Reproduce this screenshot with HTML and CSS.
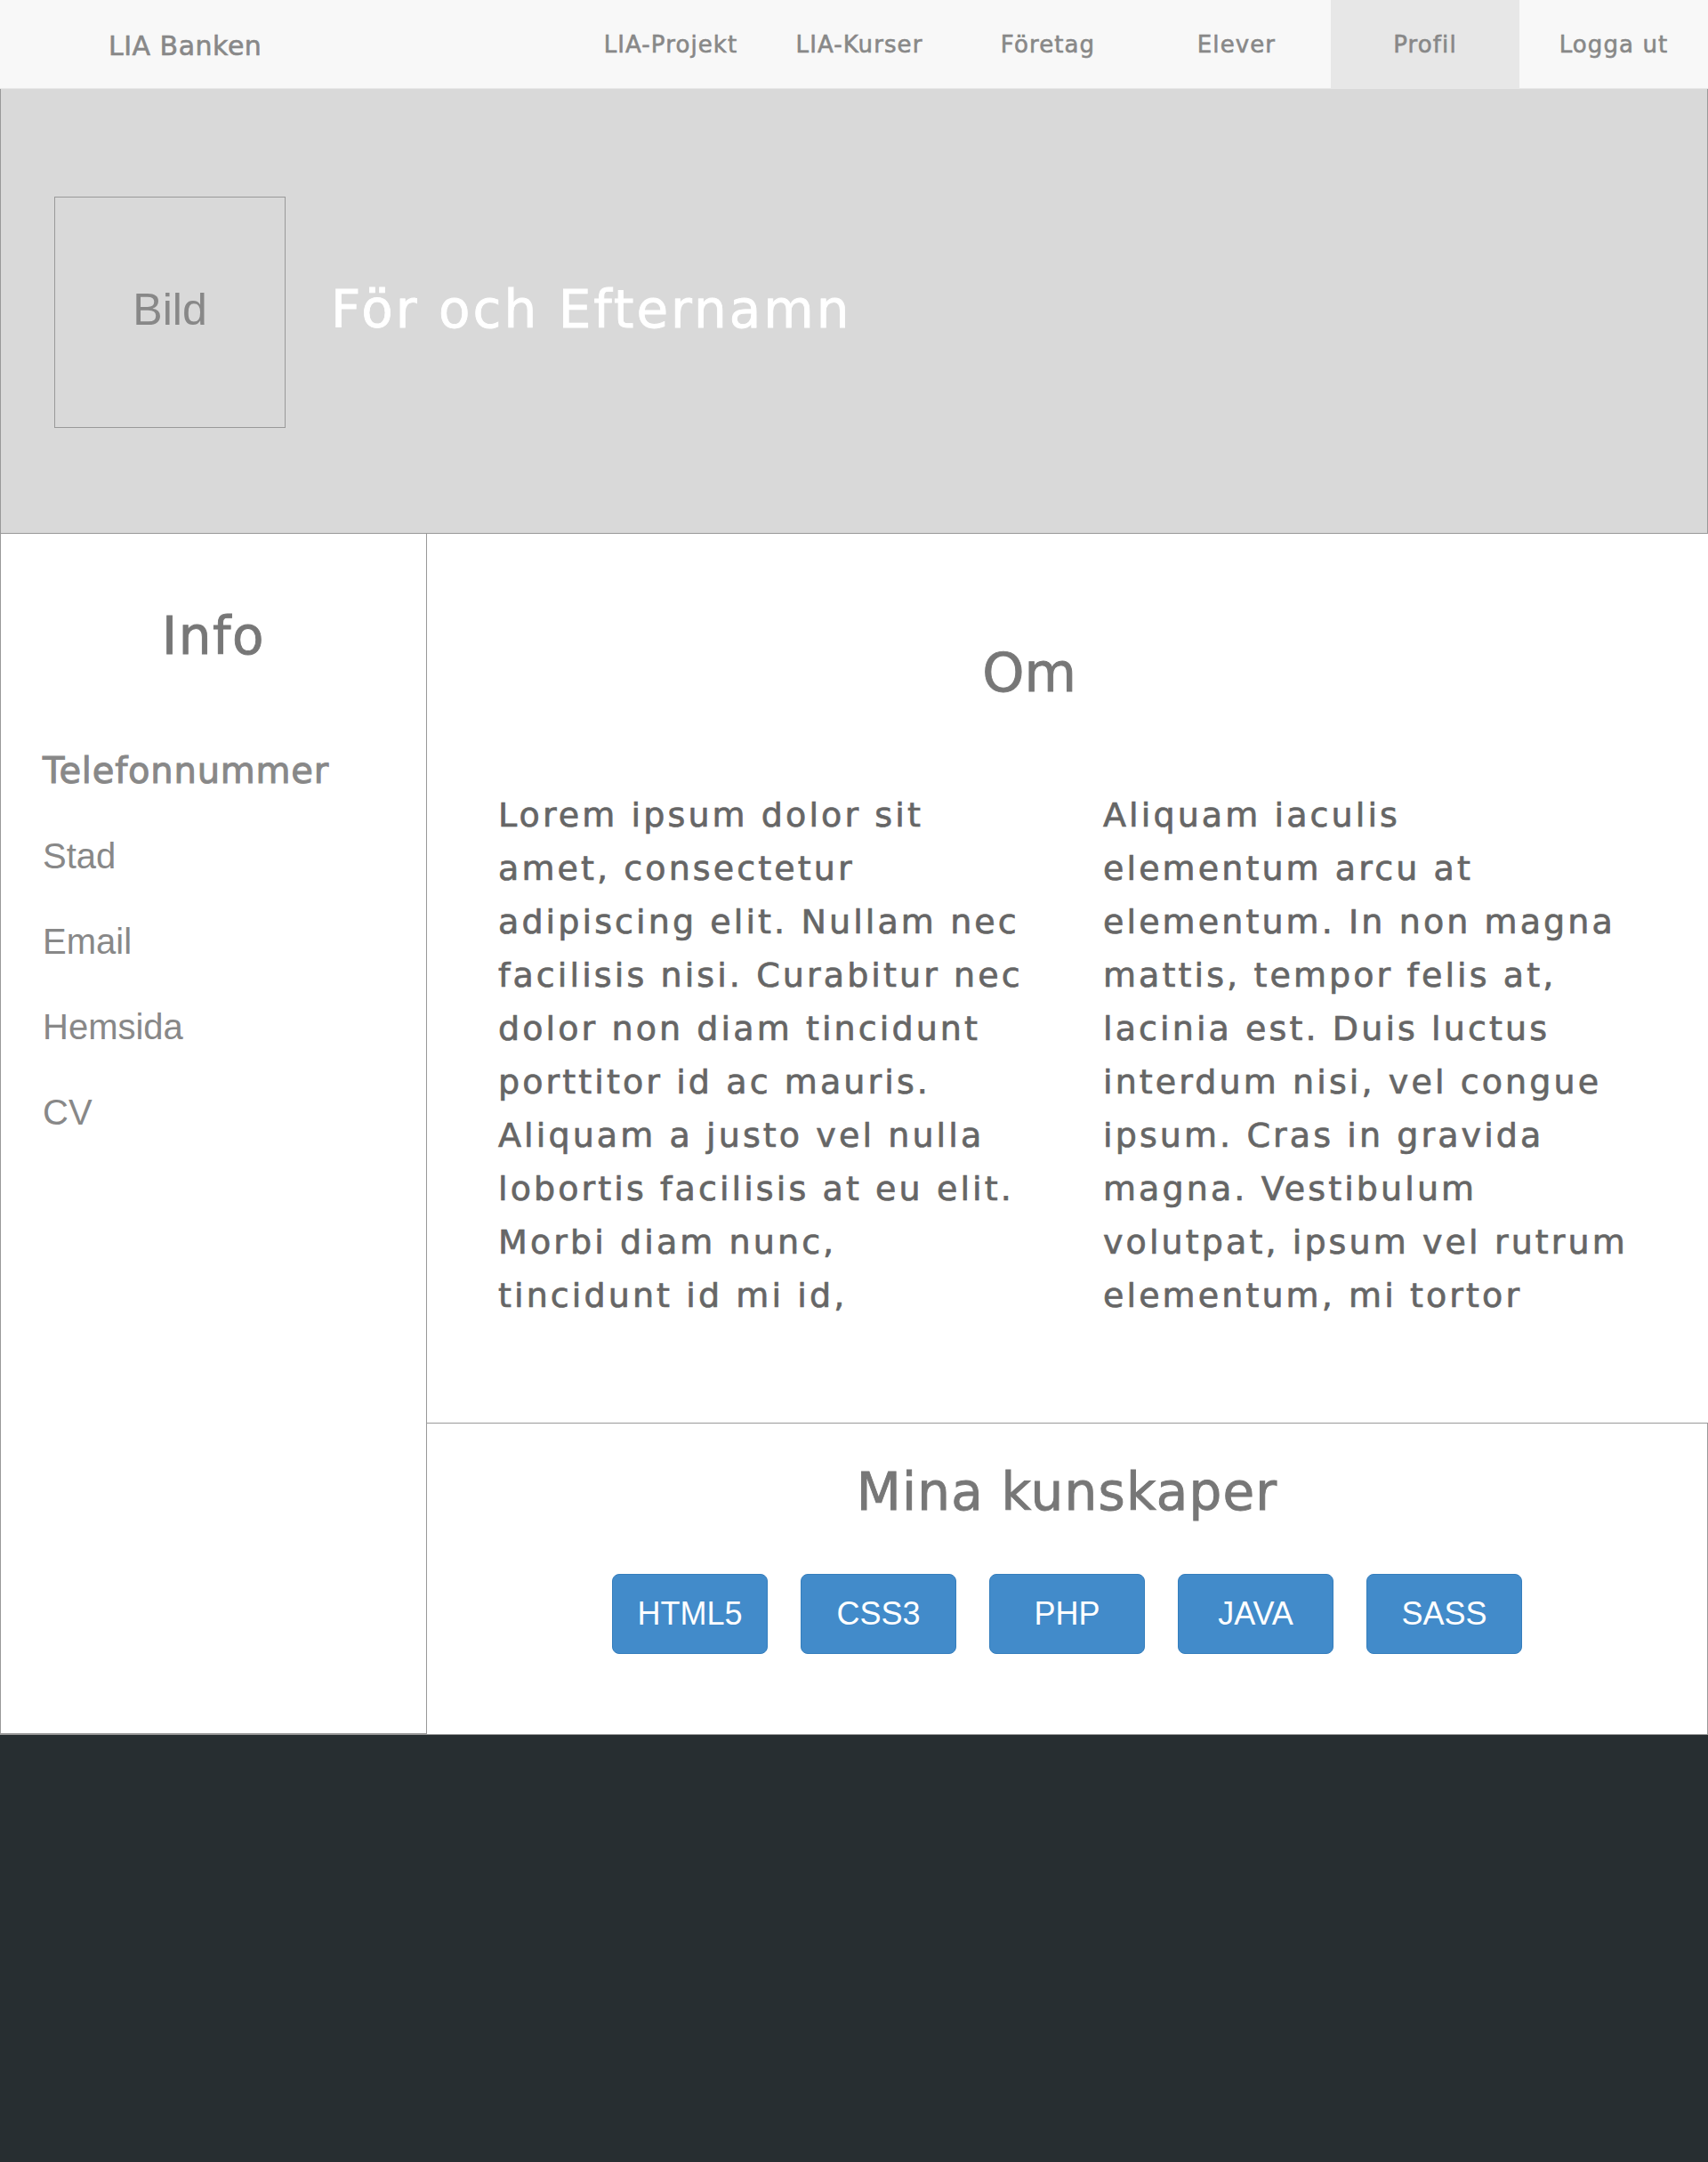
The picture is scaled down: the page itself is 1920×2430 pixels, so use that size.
FILE: index.html
```html
<!DOCTYPE html>
<html lang="sv">
<head>
<meta charset="utf-8">
<title>LIA Banken – Profil</title>
<link rel="stylesheet" href="styles.css">
</head>
<body>
<nav class="topbar">
  <div class="brand">LIA Banken</div>
  <ul class="menu">
    <li class="menu-item">LIA-Projekt</li>
    <li class="menu-item">LIA-Kurser</li>
    <li class="menu-item">Företag</li>
    <li class="menu-item">Elever</li>
    <li class="menu-item active">Profil</li>
    <li class="menu-item">Logga ut</li>
  </ul>
</nav>
<header class="hero">
  <div class="photo">Bild</div>
  <h1 class="name">För och Efternamn</h1>
</header>
<main class="profile">
  <aside class="info">
    <h2 class="info-title">Info</h2>
    <ul class="info-list">
      <li class="info-item info-phone">Telefonnummer</li>
      <li class="info-item">Stad</li>
      <li class="info-item">Email</li>
      <li class="info-item">Hemsida</li>
      <li class="info-item">CV</li>
    </ul>
  </aside>
  <div class="content">
    <section class="about">
      <h2 class="about-title">Om</h2>
      <div class="about-cols">
        <p class="about-text">Lorem ipsum dolor sit<br>amet, consectetur<br>adipiscing elit. Nullam nec<br>facilisis nisi. Curabitur nec<br>dolor non diam tincidunt<br>porttitor id ac mauris.<br>Aliquam a justo vel nulla<br>lobortis facilisis at eu elit.<br>Morbi diam nunc,<br>tincidunt id mi id,</p>
        <p class="about-text">Aliquam iaculis<br>elementum arcu at<br>elementum. In non magna<br>mattis, tempor felis at,<br>lacinia est. Duis luctus<br>interdum nisi, vel congue<br>ipsum. Cras in gravida<br>magna. Vestibulum<br>volutpat, ipsum vel rutrum<br>elementum, mi tortor</p>
      </div>
    </section>
    <section class="skills">
      <h2 class="skills-title">Mina kunskaper</h2>
      <div class="skill-list">
        <span class="skill">HTML5</span>
        <span class="skill">CSS3</span>
        <span class="skill">PHP</span>
        <span class="skill">JAVA</span>
        <span class="skill">SASS</span>
      </div>
    </section>
  </div>
</main>
<footer class="footer"></footer>
</body>
</html>
```

FILE: styles.css
```css
* { box-sizing: border-box; }

html, body {
  margin: 0;
  padding: 0;
}

body {
  width: 1920px;
  height: 2430px;
  overflow: hidden;
  font-family: "DejaVu Sans", "Liberation Sans", sans-serif;
  background: #ffffff;
}

h1, h2, p, ul { margin: 0; padding: 0; }
ul { list-style: none; }

/* ---------- top bar ---------- */
.topbar {
  display: flex;
  align-items: flex-start;
  height: 100px;
  background: #f8f8f8;
  border-bottom: 1px solid #e7e7e7;
}

.brand {
  margin-left: 122px;
  margin-top: 3px;
  font-size: 30px;
  letter-spacing: 0.5px;
  line-height: 97px;
  color: #888888;
  -webkit-text-stroke: 0.6px #888888;
}

.menu {
  display: flex;
  margin-left: auto;
  height: 99px;
}

.menu-item {
  width: 212px;
  height: 99px;
  padding-top: 2px;
  text-align: center;
  font-size: 26px;
  letter-spacing: 1.1px;
  line-height: 97px;
  color: #888888;
  -webkit-text-stroke: 0.6px #888888;
}

.menu-item.active {
  background: #e7e7e7;
}

/* ---------- hero ---------- */
.hero {
  display: flex;
  align-items: flex-start;
  height: 500px;
  padding: 121px 0 0 60px;
  background: #d9d9d9;
  border-left: 1px solid #999999;
  border-right: 1px solid #999999;
  border-bottom: 1px solid #999999;
}

.photo {
  display: flex;
  align-items: center;
  justify-content: center;
  width: 260px;
  height: 260px;
  padding-bottom: 6px;
  border: 1px solid #999999;
  font-family: "Liberation Sans", Arial, sans-serif;
  font-size: 50px;
  color: #888888;
}

.name {
  margin-left: 51px;
  align-self: center;
  margin-top: -124px;
  font-size: 58px;
  font-weight: normal;
  letter-spacing: 3px;
  color: #ffffff;
  -webkit-text-stroke: 0.8px #ffffff;
}

/* ---------- main ---------- */
.profile {
  display: flex;
  height: 1350px;
}

.info {
  width: 480px;
  height: 1350px;
  padding-top: 81px;
  border-left: 1px solid #999999;
  border-right: 1px solid #999999;
  border-bottom: 2px solid #999999;
}

.info-title {
  text-align: center;
  font-size: 58px;
  font-weight: normal;
  letter-spacing: 1.5px;
  line-height: 68px;
  color: #777777;
  -webkit-text-stroke: 0.9px #777777;
}

.info-list {
  margin-top: 69px;
  padding-left: 47px;
}

.info-item {
  font-family: "Liberation Sans", Arial, sans-serif;
  font-size: 40px;
  line-height: 96px;
  color: #888888;
}

.info-item.info-phone {
  font-family: "DejaVu Sans", sans-serif;
  font-size: 40px;
  letter-spacing: 0.8px;
  color: #888888;
  -webkit-text-stroke: 1px #888888;
}

.content {
  width: 1440px;
  display: flex;
  flex-direction: column;
}

.about {
  height: 999px;
  padding: 120px 0 0 80px;
}

.about-title {
  text-align: center;
  margin-left: -80px;
  margin-right: 86px;
  font-size: 60px;
  font-weight: normal;
  line-height: 72px;
  color: #777777;
  -webkit-text-stroke: 0.9px #777777;
}

.about-cols {
  display: grid;
  grid-template-columns: 640px 640px;
  column-gap: 40px;
  margin-top: 94px;
}

.about-text {
  font-size: 38px;
  letter-spacing: 3.1px;
  line-height: 60px;
  color: #666666;
  -webkit-text-stroke: 0.7px #666666;
  white-space: nowrap;
}

.skills {
  height: 351px;
  padding-top: 42px;
  border-top: 1px solid #999999;
  border-right: 1px solid #999999;
  border-bottom: 1px solid #999999;
}

.skills-title {
  text-align: center;
  font-size: 58px;
  font-weight: normal;
  letter-spacing: 1.2px;
  line-height: 70px;
  color: #777777;
  -webkit-text-stroke: 0.9px #777777;
}

.skill-list {
  display: flex;
  justify-content: center;
  gap: 37px;
  margin-top: 57px;
}

.skill {
  display: block;
  width: 175px;
  height: 90px;
  background: #428bca;
  border: 1px solid #357ebd;
  border-radius: 8px;
  text-align: center;
  font-family: "Liberation Sans", Arial, sans-serif;
  font-size: 36px;
  line-height: 88px;
  color: #ffffff;
}

/* ---------- footer ---------- */
.footer {
  height: 480px;
  background: #272e31;
}
```
